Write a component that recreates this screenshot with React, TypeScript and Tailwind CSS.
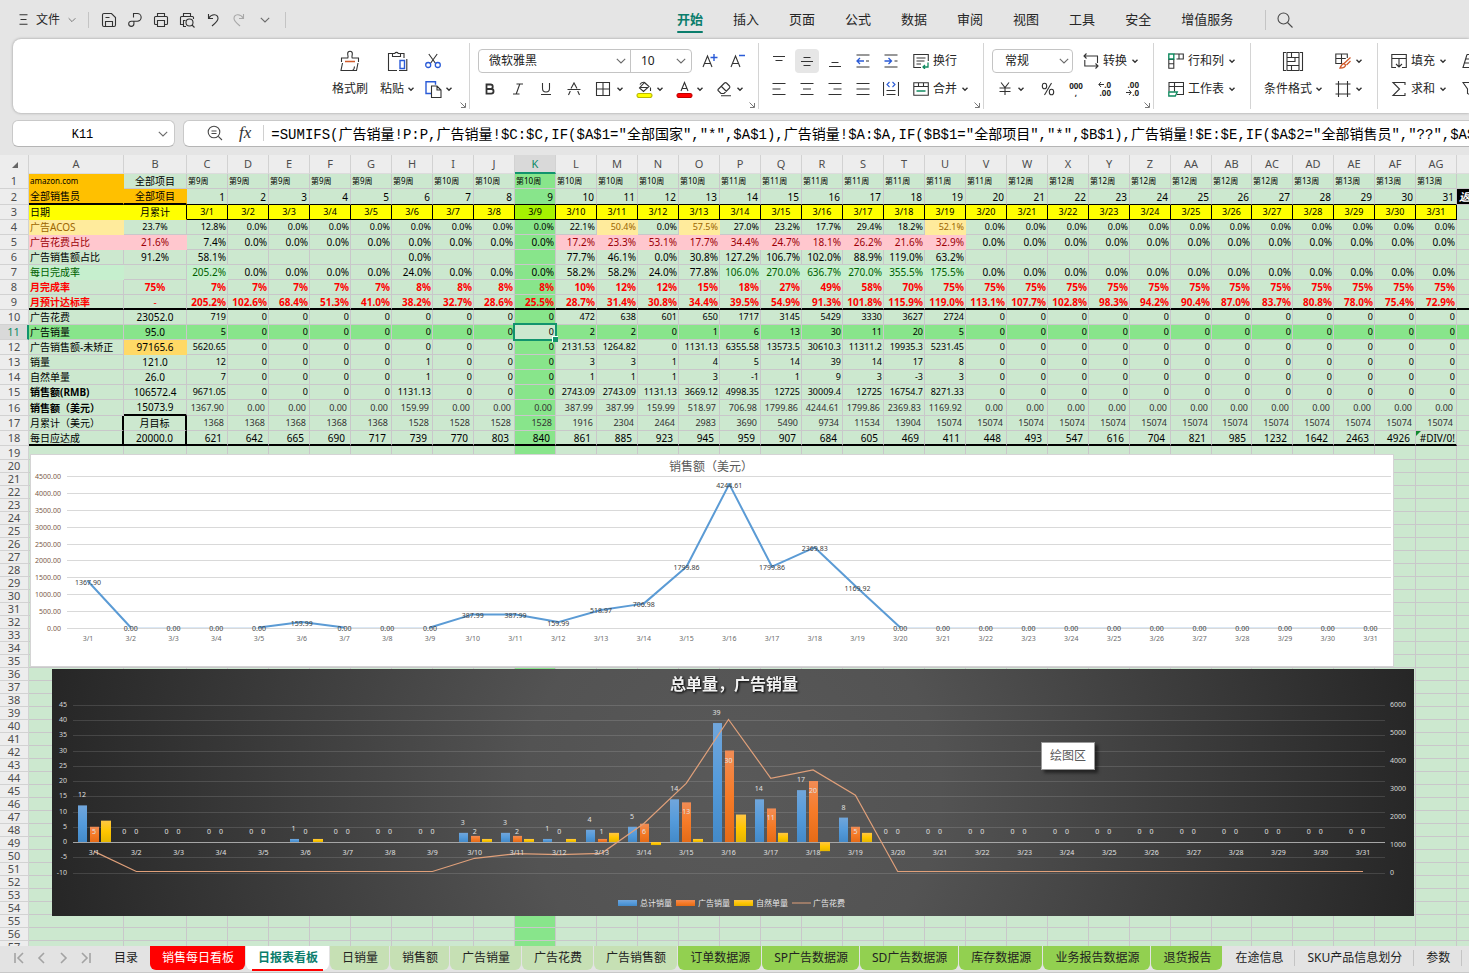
import type { ReactNode } from 'react';
import { clsx } from 'clsx';

// '0*3 5' -> ['0', '0', '0', '5'], '_' is a blank cell
const expand = (src: string): string[] =>
  src.split(' ').flatMap((part) => {
    const [value, count] = part.split('*');
    return Array(Number(count ?? 1)).fill(value === '_' ? '' : value);
  });

const COLUMNS = 'A B C D E F G H I J K L M N O P Q R S T U V W X Y Z AA AB AC AD AE AF AG AH'.split(' ');
const ACTIVE_COL = 'K';
const ACTIVE_ROW = 11;

const DATES = Array.from({ length: 31 }, (_, i) => `3/${i + 1}`);

interface SheetRow {
  label: string;
  total: string;
  values: string[];
  height?: string;
  labelClass?: string;
  totalClass?: string;
  valueClass?: string;
  cellClass?: (value: string, index: number) => string;
}

const GOOD = 'bg-[#c6efce] text-[#006100] border-[#c6efce]';
const BAD = 'bg-[#ffc7ce] text-[#9c0006] border-[#ffc7ce]';
const NEUTRAL = 'bg-[#ffeb9c] text-[#9c6500] border-[#ffeb9c]';

const ROWS: SheetRow[] = [
  {
    label: 'amazon.com',
    total: '全部项目',
    values: expand('第9周*6 第10周*7 第11周*7 第12周*7 第13周*4'),
    labelClass: 'bg-[#ffc000] border-[#ffc000] text-[8px]',
    valueClass: 'text-left text-[8px] pl-px',
  },
  {
    label: '全部销售员',
    total: '全部项目',
    values: DATES.map((_, i) => String(i + 1)),
    height: 'h-4',
    labelClass: 'bg-[#ffc000] border-r-[#ffc000] border-b-2 border-b-black',
    totalClass: 'bg-[#ffc000] border-r-[#ffc000] border-b-2 border-b-black',
    valueClass: 'text-right pr-0.5 border-b-black',
  },
  {
    label: '日期',
    total: '月累计',
    values: DATES,
    labelClass: 'bg-[#ffff00] border-[#ffff00]',
    totalClass: 'bg-[#ffff00] border-b-[#ffff00] border-r-black',
    valueClass: 'text-center text-[9px] border-black',
    cellClass: (_, i) => (i === 8 ? 'bg-[#a6f200]' : 'bg-[#ffff00]'),
  },
  {
    label: '广告ACOS',
    total: '23.7%',
    values: expand('12.8% 0.0%*8 22.1% 50.4% 0.0% 57.5% 27.0% 23.2% 17.7% 29.4% 18.2% 52.1% 0.0%*12'),
    labelClass: NEUTRAL,
    totalClass: 'text-[9px]',
    valueClass: 'text-right pr-px text-[9px]',
    cellClass: (value) => (parseFloat(value) > 50 ? NEUTRAL : ''),
  },
  {
    label: '广告花费占比',
    total: '21.6%',
    values: expand('7.4% 0.0%*8 17.2% 23.3% 53.1% 17.7% 34.4% 24.7% 18.1% 26.2% 21.6% 32.9% 0.0%*12'),
    labelClass: BAD,
    totalClass: BAD,
    valueClass: 'text-right pr-px',
    cellClass: (value) => (parseFloat(value) > 10 ? BAD : ''),
  },
  {
    label: '广告销售额占比',
    total: '91.2%',
    values: expand('58.1% _*4 0.0% _*3 77.7% 46.1% 0.0% 30.8% 127.2% 106.7% 102.0% 88.9% 119.0% 63.2% _*12'),
    valueClass: 'text-right pr-px',
  },
  {
    label: '每日完成率',
    total: '',
    values: expand('205.2% 0.0%*4 24.0% 0.0%*3 58.2%*2 24.0% 77.8% 106.0% 270.0% 636.7% 270.0% 355.5% 175.5% 0.0%*12'),
    labelClass: GOOD,
    valueClass: 'text-right pr-px',
    cellClass: (value) => (parseFloat(value) > 100 ? GOOD : ''),
  },
  {
    label: '月完成率',
    total: '75%',
    values: expand('7%*5 8%*4 10% 12%*2 15% 18% 27% 49% 58% 70% 75%*13'),
    labelClass: 'text-[#ff0000] font-bold',
    totalClass: 'text-[#ff0000] font-bold',
    valueClass: 'text-right pr-px text-[#ff0000] font-bold',
  },
  {
    label: '月预计达标率',
    total: '-',
    values: expand(
      '205.2% 102.6% 68.4% 51.3% 41.0% 38.2% 32.7% 28.6% 25.5% 28.7% 31.4% 30.8% 34.4% 39.5% 54.9% 91.3% 101.8% 115.9% 119.0% 113.1% 107.7% 102.8% 98.3% 94.2% 90.4% 87.0% 83.7% 80.8% 78.0% 75.4% 72.9%'
    ),
    labelClass: 'text-[#ff0000] font-bold border-b-2 border-b-black',
    totalClass: 'text-[#ff0000] border-b-2 border-b-black',
    valueClass: 'text-right pr-px text-[#ff0000] font-bold border-b-2 border-b-black',
  },
  {
    label: '广告花费',
    total: '23052.0',
    values: expand('719 0*8 472 638 601 650 1717 3145 5429 3330 3627 2724 0*12'),
    valueClass: 'text-right pr-px text-[9px]',
  },
  {
    label: '广告销量',
    total: '95.0',
    values: expand('5 0*8 2 2 0 1 6 13 30 11 20 5 0*12'),
    valueClass: 'text-right pr-px text-[9px]',
  },
  {
    label: '广告销售额-未矫正',
    total: '97165.6',
    values: expand('5620.65 0*8 2131.53 1264.82 0 1131.13 6355.58 13573.5 30610.3 11311.2 19935.3 5231.45 0*12'),
    totalClass: 'bg-[#ffd966] border-[#ffd966]',
    valueClass: 'text-right pr-px text-[9px]',
  },
  {
    label: '销量',
    total: '121.0',
    values: expand('12 0*4 1 0*3 3 3 1 4 5 14 39 14 17 8 0*12'),
    valueClass: 'text-right pr-px text-[9px]',
  },
  {
    label: '自然单量',
    total: '26.0',
    values: expand('7 0*4 1 0*3 1 1 1 3 -1 1 9 3 -3 3 0*12'),
    valueClass: 'text-right pr-px text-[9px]',
  },
  {
    label: '销售额(RMB)',
    total: '106572.4',
    values: expand('9671.05 0*4 1131.13 0*3 2743.09*2 1131.13 3669.12 4998.35 12725 30009.4 12725 16754.7 8271.33 0*12'),
    labelClass: 'font-bold',
    valueClass: 'text-right pr-px text-[9px]',
  },
  {
    label: '销售额（美元）',
    total: '15073.9',
    values: expand('1367.90 0.00*4 159.99 0.00*3 387.99*2 159.99 518.97 706.98 1799.86 4244.61 1799.86 2369.83 1169.92 0.00*12'),
    height: 'h-4',
    labelClass: 'font-bold',
    totalClass: 'border-b-2 border-b-black',
    valueClass: 'text-right pr-[3px] text-[9px] text-[#333333]',
  },
  {
    label: '月累计（美元）',
    total: '月目标',
    values: expand('1368*5 1528*4 1916 2304 2464 2983 3690 5490 9734 11534 13904 15074*13'),
    labelClass: 'border-r-2 border-r-black',
    totalClass: 'border-r-2 border-r-black',
    valueClass: 'text-right pr-[3px] text-[9px] text-[#333333]',
  },
  {
    label: '每日应达成',
    total: '20000.0',
    values: expand(
      '621 642 665 690 717 739 770 803 840 861 885 923 945 959 907 684 605 469 411 448 493 547 616 704 821 985 1232 1642 2463 4926 #DIV/0!'
    ),
    labelClass: 'border-r-2 border-r-black border-b-2 border-b-black',
    totalClass: 'border-r-2 border-r-black border-b-2 border-b-black',
    valueClass: 'text-right border-b-2 border-b-black',
    cellClass: (value) => (value.startsWith('#') ? 'pr-px' : 'pr-[5px]'),
  },
];

const rowValues = (n: number) => ROWS[n - 1].values.map(Number);

/* ---------- icons ---------- */

interface IconProps {
  size?: number;
  color?: string;
  children: ReactNode;
}

function Icon({ size = 16, color = '#333333', children }: IconProps) {
  return (
    <svg
      width={size}
      height={size}
      viewBox={`0 0 ${size} ${size}`}
      fill="none"
      stroke={color}
      strokeWidth="1.1"
      className="shrink-0"
      aria-hidden="true"
    >
      {children}
    </svg>
  );
}

const Caret = () => (
  <svg width="6" height="6" viewBox="0 0 6 6" fill="none" stroke="#333333" strokeWidth="1.4" className="shrink-0" aria-hidden="true">
    <path d="M0.5 1.7 3 4.2 5.5 1.7" />
  </svg>
);

const Chevron = ({ className = '' }: { className?: string }) => (
  <svg width="10" height="6" viewBox="0 0 10 6" fill="none" stroke="#6b6b6b" strokeWidth="1.1" className={clsx('shrink-0', className)} aria-hidden="true">
    <path d="M0.8 0.8 5 5 9.2 0.8" />
  </svg>
);

const Corner = () => (
  <svg width="6" height="6" viewBox="0 0 6 6" fill="none" stroke="#777777" className="absolute bottom-[5px] right-1" aria-hidden="true">
    <path d="M0.5 0.5 5 5M5.5 1V5.5H1" />
  </svg>
);

const MenuLines = () => (
  <Icon size={11}>
    <path d="M1.500 .8h8M2.500 5.500h6M1.500 10.200h8" />
  </Icon>
);
const Save = () => (
  <Icon>
    <path d="M1.500 3A1.500 1.500 0 0 1 3 1.500h7.500l4 4V13a1.500 1.500 0 0 1-1.500 1.500H3A1.500 1.500 0 0 1 1.500 13zM4.500 14.500V9.500h7v5M4.500 5.500h4" />
  </Icon>
);
const Export = () => (
  <Icon>
    <path d="M6.500 5.500v-4h3.800a3.800 3.800 0 0 1 0 7.700H4.300a2.600 2.600 0 1 0 2.600 2.600V9.200" />
  </Icon>
);
const Print = () => (
  <Icon>
    <path d="M4.500 4.500v-3h7v3M4 12.500H2.500a1 1 0 0 1-1-1v-6a1 1 0 0 1 1-1h11a1 1 0 0 1 1 1v6a1 1 0 0 1-1 1H12M4.500 8.500h7v6h-7z" />
  </Icon>
);
const Preview = () => (
  <Icon>
    <path d="M4.500 4.500v-3h7v3M4 12.500H1.500v-7a1 1 0 0 1 1-1h11a1 1 0 0 1 1 1V7M6.500 8.500h-2v6H7" />
    <circle cx="10.500" cy="10.500" r="3.500" />
    <path d="m13 13 2.500 2.500" />
  </Icon>
);
const Undo = () => (
  <Icon>
    <path d="M3.500 2v4.500H8M3.700 6.200C7 1 13 2 13 6.500c0 2.500-2.500 4.500-6 7.500" />
  </Icon>
);
const Redo = () => (
  <Icon color="#a8a8a8">
    <path d="M12.500 2v4.500H8M12.300 6.200C9 1 3 2 3 6.500c0 2.500 2.500 4.500 6 7.500" />
  </Icon>
);
const Search = () => (
  <Icon size={18} color="#4a4a4a">
    <circle cx="7.500" cy="7.500" r="5.500" />
    <path d="m11.500 11.500 5 5" />
  </Icon>
);
const FormatPainter = () => (
  <Icon size={22}>
    <path d="M2.500 12V8h6.300c.8-1.500-.3-3-.1-4.500a2.300 2.300 0 0 1 4.600 0c.2 1.500-.9 3-.1 4.500h6.300v4M3.500 13l-1.500 7.500h15.500L19 13M13.500 20.500c1.500-1 2-2.500 2-4" />
    <path d="M6 11.500h10" stroke="#d05a2a" strokeWidth="1.400" />
  </Icon>
);
const Paste = () => (
  <Icon size={22}>
    <path d="M6 3.500H2.500v17H11M15 3.500h3V8M6.500 3.500h2.200a2 2 0 0 1 3.600 0h2.200v3h-8zM20.800 9v11.500H13" />
    <path d="M14 10.500h4.500v8H14z" stroke="#2a5bd7" strokeWidth="1.400" />
  </Icon>
);
const Cut = () => (
  <Icon>
    <path d="m3.800 1 6.800 9.500M12.200 1 5.400 10.500" />
    <g stroke="#2a5bd7" strokeWidth="1.300">
      <circle cx="3.200" cy="12" r="2.500" />
      <circle cx="12.800" cy="12" r="2.500" />
    </g>
  </Icon>
);
const Copy = () => (
  <Icon size={17}>
    <path d="M6 12.500H1V.8h9.500v3" stroke="#2a5bd7" strokeWidth="1.400" />
    <path d="M6.500 5h5.500l4 4v7.500H6.500zM12 5v4h4" />
  </Icon>
);
const GrowFont = () => (
  <Icon>
    <path d="M1 14 5.500 3 10 14M2.600 10.500h5.800" />
    <path d="M12 1v7M8.500 4.500h7" stroke="#2a5bd7" strokeWidth="1.400" />
  </Icon>
);
const ShrinkFont = () => (
  <Icon>
    <path d="M1 14 5.500 3 10 14M2.600 10.500h5.800" />
    <path d="M9 2.500h6" stroke="#2a5bd7" strokeWidth="1.400" />
  </Icon>
);
const Bold = () => (
  <Icon>
    <path d="M4.500 3.500h4a2.200 2.200 0 0 1 0 4.500h-4zM4.500 8h4.700a2.300 2.300 0 0 1 0 4.700H4.500z" strokeWidth="1.800" />
  </Icon>
);
const Italic = () => (
  <Icon>
    <path d="M6.500 3h6.500M3 13h6.500M9.800 3 6.200 13" />
  </Icon>
);
const Underline = () => (
  <Icon>
    <path d="M4.500 2v5.500a3.500 3.500 0 0 0 7 0V2M3 13.500h10" />
  </Icon>
);
const Strike = () => (
  <Icon>
    <path d="M5 7.500 8 2l3 5.500M1.500 8.500h13M4.300 10l-1.800 4M11.700 10l1.800 4" />
  </Icon>
);
const Borders = () => (
  <Icon>
    <path d="M1.500 1.500h13v13h-13zM8 1.500v13M1.500 8h13" />
  </Icon>
);
const FillColor = () => (
  <Icon size={17}>
    <path d="M4 3.500c1.500-3 5.500-3 6 0M8.500 1.500l4.500 4-5.500 5L3.500 7zM4.500 6.500h7M14.500 6.500v3.500" />
    <rect x="1" y="12.500" width="15" height="4" rx="2" fill="#ffff00" stroke="#b8b800" />
  </Icon>
);
const FontColor = () => (
  <Icon size={17}>
    <path d="M5 10 8.500 1.500 12 10M6.200 7.500h4.600" />
    <rect x="1" y="12.500" width="15" height="4" rx="2" fill="#ff0000" stroke="#c00000" />
  </Icon>
);
const Eraser = () => (
  <Icon>
    <path d="m2 8.500 6.500-6.500a1.500 1.500 0 0 1 2 0l3 3a1.500 1.500 0 0 1 0 2L8 12.500H5L2 9.500zM5.500 5.500l5 5M5 14.800h10" />
  </Icon>
);
const AlignTop = () => (
  <Icon>
    <path d="M2 3.500h12M4.500 7.500h7" />
  </Icon>
);
const AlignMiddle = () => (
  <Icon>
    <path d="M4.500 4.500h7M2 8.500h12M4.500 12.500h7" />
  </Icon>
);
const AlignBottom = () => (
  <Icon>
    <path d="M4.500 9.500h7M2 13.500h12" />
  </Icon>
);
const Outdent = () => (
  <Icon>
    <path d="M1.500 2h13M1.500 14h13M11 8h3" />
    <path d="M9 8H2M5 5 2 8l3 3" stroke="#2a5bd7" strokeWidth="1.300" />
  </Icon>
);
const Indent = () => (
  <Icon>
    <path d="M1.500 2h13M1.500 14h13M11.500 8h3" />
    <path d="M1.500 8h7M5.500 5l3 3-3 3" stroke="#2a5bd7" strokeWidth="1.300" />
  </Icon>
);
const AlignLeft = () => (
  <Icon>
    <path d="M1.500 2.500h13M1.500 8h8M1.500 13.500h13" />
  </Icon>
);
const AlignCenter = () => (
  <Icon>
    <path d="M1.500 2.500h13M4 8h8M1.500 13.500h13" />
  </Icon>
);
const AlignRight = () => (
  <Icon>
    <path d="M1.500 2.500h13M6.500 8h8M1.500 13.500h13" />
  </Icon>
);
const Justify = () => (
  <Icon>
    <path d="M1.500 2.500h13M1.500 8h13M1.500 13.500h13" />
  </Icon>
);
const Distribute = () => (
  <Icon>
    <path d="M.500 1v14M15.500 1v14M3.500 9.500h9M3.500 13.500h9" />
    <path d="M6.500 1 4 3.500 6.500 6M9.500 1 12 3.500 9.500 6" stroke="#2a5bd7" />
  </Icon>
);
const Wrap = () => (
  <Icon>
    <path d="M8 14.500H.800v-13h14.500V8M3.500 5h9M3.500 8h8M3.500 11H8" />
    <path d="M15 9.500v4.500h-5M12 12l-2 2 2 2" stroke="#0f8a5f" strokeWidth="1.300" />
  </Icon>
);
const Merge = () => (
  <Icon>
    <path d="M.800 1.800h14.500v12.500H.800zM.800 5.500h14.500M5.500 1.800v3.700M10.500 1.800v3.700" />
    <path d="M3.500 10h9" stroke="#0f8a5f" strokeWidth="1.400" />
  </Icon>
);
const Convert = () => (
  <Icon>
    <path d="M3.500.500 1 3l2.500 2.500M1 3h13.500v7M12.500 15.500 15 13l-2.500-2.500M15 13H1.800V7" />
  </Icon>
);
const Yen = () => (
  <Icon>
    <path d="M4 1.500 8 6.500l4-5M8 6.500V14M2.500 7h11M2.500 10.500h11" />
  </Icon>
);
const Percent = () => (
  <Icon>
    <path d="M11.500 2 4.500 14" />
    <ellipse cx="4.500" cy="5" rx="2.200" ry="2.800" />
    <ellipse cx="11.500" cy="11" rx="2.200" ry="2.800" />
  </Icon>
);
const RowsCols = () => (
  <Icon>
    <path d="M.800 6.500h5v8.700h-5zM.800 10.800h5M6 1h9.300v5H8.500M11 1v5" />
    <path d="M.800 1h5v5h-5z" stroke="#0f8a5f" strokeWidth="1.400" />
  </Icon>
);
const Worksheet = () => (
  <Icon>
    <path d="M1 10.500v-9h14.500v12H9M1 5.500h14.500M6.500 1.500v9" />
    <path d="M.800 11h8.500l-2 4H.800z" stroke="#0f8a5f" strokeWidth="1.300" />
  </Icon>
);
const CondFormat = () => (
  <Icon size={22}>
    <path d="M4 2.500H1.500v18H4M18 2.500h2.500v18H18M5 2.500h12v18H5zM5 7.500h12M5 15.500h12M9.500 2.500v5M9.500 15.500v5M5 11.500h8v-4" />
  </Icon>
);
const TableStyle = () => (
  <Icon>
    <path d="M7 10.500H.800v-9.500h11.500v4M.800 5.500h10M6.500 1v9" />
    <path d="m15.500 4.500-6.500 6M9 10.500c-2 0-2.500 1.500-4 4.500 3 0 5.500-.5 5.500-3zM11.500 12l4-4" stroke="#d05a2a" strokeWidth="1.300" />
  </Icon>
);
const Frame = () => (
  <Icon>
    <path d="M3.500 0v16M12.500 0v16M.500 3h15M.500 13h15" />
  </Icon>
);
const Fill = () => (
  <Icon>
    <path d="M5 14.500H.800V1.500h14.500v13H11M.800 5.500h14.500M8 5.500v8.500M5 11l3 3 3-3" />
  </Icon>
);
const Sum = () => (
  <Icon>
    <path d="M14 4V1.500H2L8.500 8 2 14.500h12V12" />
  </Icon>
);
const Triangle = () => (
  <Icon>
    <path d="M5 1.500h10M5 1.500 1 14.500h14M4 6h11M2.500 10h12" />
  </Icon>
);
const Filter = () => (
  <Icon>
    <path d="M1 1.500h14L9.500 8v6.500l-4-2V8z" />
  </Icon>
);
const SmallArrow = ({ d }: { d: string }) => (
  <svg width="6" height="7" viewBox="0 0 6 7" fill="none" stroke="#333333" className="shrink-0" aria-hidden="true">
    <path d={d} />
  </svg>
);

/* ---------- ribbon ---------- */

interface ToolProps {
  label: string;
  className?: string;
  children: ReactNode;
}

function Tool({ label, className, children }: ToolProps) {
  return (
    <button type="button" aria-label={label} title={label} className={clsx('flex h-6 shrink-0 items-center', className)}>
      {children}
    </button>
  );
}

interface GroupProps {
  className: string;
  corner?: boolean;
  children: ReactNode;
}

function Group({ className, corner, children }: GroupProps) {
  return (
    <div className={clsx('relative flex shrink-0 py-2', className)}>
      {children}
      {corner && <Corner />}
      <span className="absolute bottom-1 right-0 top-1 w-px bg-[#d4d4d4]" />
    </div>
  );
}

const Line = ({ children }: { children: ReactNode }) => <div className="flex h-7 items-center">{children}</div>;

const SELECT = 'h-[22px] w-full appearance-none bg-transparent text-[12px] text-[#222222] outline-none';

const MENUS = ['插入', '页面', '公式', '数据', '审阅', '视图', '工具', '安全', '增值服务'];

function MenuBar() {
  return (
    <header className="flex h-[39px] shrink-0 items-center text-[#262626]">
      <div className="flex w-[677px] shrink-0 items-center">
        <button type="button" className="ml-[18px] flex items-center text-[12px]">
          <MenuLines />
          <span className="ml-[7px] mr-2">文件</span>
          <Chevron className="w-2" />
        </button>
        <span className="ml-3 h-4 w-px bg-[#c4c4c4]" />
        <div className="ml-3 flex items-center gap-2.5">
          <Tool label="保存"><Save /></Tool>
          <Tool label="输出"><Export /></Tool>
          <Tool label="打印"><Print /></Tool>
          <Tool label="打印预览"><Preview /></Tool>
          <Tool label="撤销"><Undo /></Tool>
          <Tool label="恢复"><Redo /></Tool>
          <Tool label="更多" className="ml-[3px]"><Chevron /></Tool>
        </div>
        <span className="ml-[15px] h-4 w-px bg-[#c4c4c4]" />
      </div>
      <nav className="flex shrink-0 items-center gap-[30px] text-[13px]">
        <a href="#home" className="relative font-bold text-[#0a7d6c]">
          开始
          <span className="absolute -bottom-1 left-0 h-0.5 w-full rounded bg-[#0a7d6c]" />
        </a>
        {MENUS.map((menu) => (
          <a key={menu} href={`#${menu}`}>{menu}</a>
        ))}
      </nav>
      <span className="ml-8 h-5 w-px shrink-0 bg-[#c4c4c4]" />
      <Tool label="搜索" className="ml-2.5"><Search /></Tool>
    </header>
  );
}

function Ribbon() {
  return (
    <div className="ml-[13px] flex h-[74px] shrink-0 overflow-hidden rounded-l-lg bg-white text-[12px] text-[#262626] shadow-[0_0_3px_rgba(0,0,0,0.35)]">
      <Group className="w-[457px] justify-end pr-[15px]" corner>
        <button type="button" className="flex w-12 flex-col items-center">
          <Line><FormatPainter /></Line>
          <Line>格式刷</Line>
        </button>
        <button type="button" className="flex w-[46px] flex-col items-center">
          <Line><Paste /></Line>
          <Line><span className="mr-1">粘贴</span><Caret /></Line>
        </button>
        <div className="ml-px w-[34px]">
          <Line><Tool label="剪切" className="ml-1"><Cut /></Tool></Line>
          <Line><Tool label="复制" className="ml-1 gap-1"><Copy /><Caret /></Tool></Line>
        </div>
      </Group>

      <Group className="w-[289px] flex-col pl-2" corner>
        <Line>
          <div className="flex rounded border border-[#c4c4c4]">
            <div className="relative w-[152px] border-r border-[#c4c4c4]">
              <select aria-label="字体" className={clsx(SELECT, 'pl-2.5')}>
                <option>微软雅黑</option>
              </select>
              <Chevron className="pointer-events-none absolute right-1 top-2" />
            </div>
            <div className="relative w-[60px]">
              <select aria-label="字号" className={clsx(SELECT, 'pl-2.5')}>
                <option>10</option>
              </select>
              <Chevron className="pointer-events-none absolute right-[5px] top-2" />
            </div>
          </div>
          <Tool label="增大字号" className="ml-1 w-7 justify-center"><GrowFont /></Tool>
          <Tool label="减小字号" className="w-7 justify-center"><ShrinkFont /></Tool>
        </Line>
        <Line>
          <Tool label="加粗" className="w-6 justify-center"><Bold /></Tool>
          <Tool label="倾斜" className="ml-1 w-6 justify-center"><Italic /></Tool>
          <Tool label="下划线" className="ml-1 w-6 justify-center"><Underline /></Tool>
          <Tool label="删除线" className="ml-1 w-6 justify-center"><Strike /></Tool>
          <Tool label="边框" className="ml-[9px] w-[41px] gap-1.5"><Borders /><Caret /></Tool>
          <Tool label="填充颜色" className="w-10 gap-1"><FillColor /><Caret /></Tool>
          <Tool label="字体颜色" className="w-10 gap-1"><FontColor /><Caret /></Tool>
          <Tool label="清除" className="gap-[5px]"><Eraser /><Caret /></Tool>
        </Line>
      </Group>

      <Group className="w-[225px] flex-col pl-2" corner>
        <Line>
          <Tool label="顶端对齐" className="w-6 justify-center"><AlignTop /></Tool>
          <Tool label="垂直居中" className="ml-1 w-6 justify-center rounded bg-[#e6e6e6]"><AlignMiddle /></Tool>
          <Tool label="底端对齐" className="ml-1 w-6 justify-center"><AlignBottom /></Tool>
          <Tool label="减少缩进" className="ml-1 w-6 justify-center"><Outdent /></Tool>
          <Tool label="增加缩进" className="ml-1 w-6 justify-center"><Indent /></Tool>
          <Tool label="自动换行" className="ml-2.5 gap-1"><Wrap />换行</Tool>
        </Line>
        <Line>
          <Tool label="左对齐" className="w-6 justify-center"><AlignLeft /></Tool>
          <Tool label="水平居中" className="ml-1 w-6 justify-center"><AlignCenter /></Tool>
          <Tool label="右对齐" className="ml-1 w-6 justify-center"><AlignRight /></Tool>
          <Tool label="两端对齐" className="ml-1 w-6 justify-center"><Justify /></Tool>
          <Tool label="分散对齐" className="ml-1 w-6 justify-center"><Distribute /></Tool>
          <Tool label="合并居中" className="ml-2.5 gap-1"><Merge />合并<span className="ml-px"><Caret /></span></Tool>
        </Line>
      </Group>

      <Group className="w-[170px] flex-col pl-2" corner>
        <Line>
          <div className="relative w-[81px] rounded border border-[#c4c4c4]">
            <select aria-label="数字格式" className={clsx(SELECT, 'pl-3')}>
              <option>常规</option>
            </select>
            <Chevron className="pointer-events-none absolute right-[3px] top-2" />
          </div>
          <Tool label="转换" className="ml-2.5 gap-1"><Convert />转换<span className="ml-px"><Caret /></span></Tool>
        </Line>
        <Line>
          <Tool label="货币" className="ml-[5px] gap-[5px]"><Yen /><Caret /></Tool>
          <Tool label="百分比" className="ml-[10px] w-7 justify-center"><Percent /></Tool>
          <Tool label="千位分隔" className="w-7 flex-col justify-center text-[8px] font-bold leading-[7px]">
            <span>000</span>
            <span>,</span>
          </Tool>
          <Tool label="增加小数位" className="w-7 flex-col items-end justify-center pr-[7px] text-[8px] font-bold leading-[8px]">
            <span className="flex"><SmallArrow d="M6 3.500H1M3 1 .8 3.500 3 6" />.0</span>
            <span>.00</span>
          </Tool>
          <Tool label="减少小数位" className="w-7 flex-col items-end justify-center pr-[7px] text-[8px] font-bold leading-[8px]">
            <span>.00</span>
            <span className="flex"><SmallArrow d="M0 3.500h5M3 1l2.200 2.500L3 6" />.0</span>
          </Tool>
        </Line>
      </Group>

      <Group className="w-[97px] flex-col pl-[14px]">
        <Line><Tool label="行和列" className="gap-1"><RowsCols />行和列<span className="ml-px"><Caret /></span></Tool></Line>
        <Line><Tool label="工作表" className="gap-1"><Worksheet />工作表<span className="ml-px"><Caret /></span></Tool></Line>
      </Group>

      <Group className="w-[127px] pl-3">
        <button type="button" className="flex w-[60px] flex-col items-center">
          <Line><CondFormat /></Line>
          <Line><span className="mr-1">条件格式</span><Caret /></Line>
        </button>
        <div className="ml-3">
          <Line><Tool label="表格样式" className="gap-[5px]"><TableStyle /><Caret /></Tool></Line>
          <Line><Tool label="单元格样式" className="gap-[5px]"><Frame /><Caret /></Tool></Line>
        </div>
      </Group>

      <div className="flex shrink-0 py-2 pl-[13px]">
        <div className="w-[71px]">
          <Line><Tool label="填充" className="gap-1"><Fill />填充<span className="ml-px"><Caret /></span></Tool></Line>
          <Line><Tool label="求和" className="gap-1"><Sum />求和<span className="ml-px"><Caret /></span></Tool></Line>
        </div>
        <div>
          <Line><Tool label="排序"><Triangle /></Tool></Line>
          <Line><Tool label="筛选"><Filter /></Tool></Line>
        </div>
      </div>
    </div>
  );
}

const FORMULA =
  '=SUMIFS(广告销量!P:P,广告销量!$C:$C,IF($A$1="全部国家","*",$A$1),广告销量!$A:$A,IF($B$1="全部项目","*",$B$1),广告销量!$E:$E,IF($A$2="全部销售员","??",$A$2))';

function FormulaBar() {
  return (
    <div className="flex h-[42px] shrink-0 items-center pb-0.5 pl-3">
      <div className="relative w-[163px] shrink-0 rounded-md border border-[#c9c9c9] border-b-[#b5b5b5] bg-white">
        <input
          aria-label="名称框"
          defaultValue="K11"
          className="block h-[25px] w-full rounded-md bg-transparent pr-[22px] pt-[3px] text-center font-['Liberation_Mono','Noto_Sans_CJK_SC',monospace] text-[12px] outline-none"
        />
        <Chevron className="absolute right-1.5 top-2.5" />
      </div>
      <div className="ml-2 flex h-[27px] min-w-0 flex-1 items-center rounded-l-md border border-r-0 border-[#c9c9c9] border-b-[#b5b5b5] bg-white pl-[23px]">
        <Tool label="缩小">
          <Icon color="#4a4a4a">
            <circle cx="7" cy="7" r="5.8" />
            <path d="m11.300 11.300 3.700 3.700M4.500 6h5M4.500 8.500h5" />
          </Icon>
        </Tool>
        <Tool label="插入函数" className="ml-4 font-['Liberation_Serif',serif] text-[17px] italic text-[#333333]">fx</Tool>
        <span className="ml-3 h-4 w-px shrink-0 bg-[#d0d0d0]" />
        <input
          aria-label="编辑栏"
          defaultValue={FORMULA}
          className="ml-[7px] h-[25px] min-w-0 flex-1 bg-transparent font-['Liberation_Mono','Noto_Sans_CJK_SC',monospace] text-[14px] text-black outline-none"
        />
      </div>
    </div>
  );
}

/* ---------- sheet ---------- */

const colWidth = (col: string) => {
  if (col === 'A') return 'w-[95px]';
  if (col === 'B') return 'w-[63px]';
  return col === 'AB' ? 'w-10' : 'w-[41px]';
};

const cellBg = (col: string, row: number) => {
  if (col === ACTIVE_COL && row === ACTIVE_ROW) return 'bg-[#cce8cf]';
  return col === ACTIVE_COL || row === ACTIVE_ROW ? 'bg-[#88e58b]' : 'bg-[#cce8cf]';
};

function RowHeader({ row }: { row: number }) {
  const active = row === ACTIVE_ROW;
  return (
    <th
      scope="row"
      className={clsx(
        'border-b border-b-[#d2d2d2] p-0 text-center text-[11px] font-normal leading-[12px]',
        active
          ? 'border-r-2 border-r-[#12946d] bg-[#d9d9d9] text-[#0b8a67]'
          : 'border-r border-r-[#d2d2d2] bg-[#ededed] text-[#4d4d4d]'
      )}
    >
      {row}
    </th>
  );
}

function Sheet() {
  return (
    <table className="w-[1498px] table-fixed border-separate border-spacing-0 whitespace-nowrap text-[10px] leading-[12px] text-black">
      <colgroup>
        <col className="w-[29px]" />
        {COLUMNS.map((col) => (
          <col key={col} className={colWidth(col)} />
        ))}
      </colgroup>
      <thead>
        <tr className="h-[19px] text-[11px]">
          <th className="border-r border-[#d2d2d2] bg-[#ededed] p-0">
            <svg width="6" height="6" viewBox="0 0 6 6" className="ml-3" aria-hidden="true">
              <path d="M6 0v6H0z" fill="#666666" />
            </svg>
          </th>
          {COLUMNS.map((col) => (
            <th
              key={col}
              scope="col"
              className={clsx(
                'border-r border-r-[#d2d2d2] p-0 font-normal',
                col === ACTIVE_COL
                  ? 'border-b-2 border-b-[#12946d] bg-[#d9d9d9] text-[#0b8a67]'
                  : 'border-b border-b-[#dcdcdc] bg-[#ededed] pb-px text-[#4d4d4d]'
              )}
            >
              {col}
            </th>
          ))}
        </tr>
      </thead>
      <tbody>
        {ROWS.map((data, r) => {
          const row = r + 1;
          return (
            <tr key={row} className={data.height ?? 'h-[15px]'}>
              <RowHeader row={row} />
              <td className={cell(cellBg('A', row), 'pl-px', data.labelClass)}>{data.label}</td>
              <td className={cell(cellBg('B', row), 'text-center', data.totalClass)}>{data.total}</td>
              {data.values.map((value, i) => {
                const col = COLUMNS[i + 2];
                const selected = col === ACTIVE_COL && row === ACTIVE_ROW;
                return (
                  <td key={col} className={cell(cellBg(col, row), data.valueClass, data.cellClass?.(value, i), 'relative')}>
                    {value}
                    {selected && (
                      <span className="absolute -inset-x-0.5 -inset-y-0.5 z-10 border-2 border-[#12946d]">
                        <span className="absolute -bottom-[3px] -right-[3px] size-1.5 border-l border-t border-white bg-[#12946d]" />
                      </span>
                    )}
                    {value.startsWith('#') && (
                      <svg width="5" height="5" viewBox="0 0 5 5" className="absolute left-0 top-0" aria-hidden="true">
                        <path d="M0 0h5L0 5z" fill="#0f8a2f" />
                      </svg>
                    )}
                  </td>
                );
              })}
              <td
                className={cell(
                  cellBg('AH', row),
                  'overflow-hidden pl-0.5',
                  row === 2 && 'bg-black text-[11px] font-bold italic text-white',
                  row === 9 && 'border-b-2 border-b-black'
                )}
              >
                {row === 2 && '返回'}
              </td>
            </tr>
          );
        })}
        {Array.from({ length: 39 }, (_, i) => i + 19).map((row) => (
          <tr key={row} className={row === 19 ? 'h-[14px]' : 'h-[13px]'}>
            <RowHeader row={row} />
            {COLUMNS.map((col) => (
              <td key={col} className={cell(cellBg(col, row))} />
            ))}
          </tr>
        ))}
      </tbody>
    </table>
  );
}

// the default gridlines apply only on sides the extra classes leave alone
function cell(bg: string, ...rest: (string | false | undefined)[]) {
  const extra = clsx(rest);
  const has = (re: RegExp) => re.test(extra);
  return clsx(
    'p-0 leading-[12px]',
    !has(/(^| )bg-/) && bg,
    !has(/border-r-2/) && 'border-r',
    !has(/border-b-2/) && 'border-b',
    !has(/(^| )border-(\[|black)/) && [
      !has(/border-r-(\[|black)/) && 'border-r-[#c9c7ca]',
      !has(/border-b-(\[|black)/) && 'border-b-[#c9c7ca]',
    ],
    extra
  );
}

/* ---------- charts ---------- */

function SalesChart() {
  const sales = rowValues(16);
  const x = (i: number) => 58 + i * 42.75;
  const y = (v: number) => 174 - (v * 152) / 4500;
  const points = sales.map((v, i) => ({ x: x(i), y: y(v) }));

  return (
    <svg width="1364" height="213" viewBox="0 0 1364 213" className="absolute left-[30px] top-[299px]" role="img" aria-label="销售额（美元）">
      <rect x="0.5" y="0.5" width="1363" height="212" fill="#ffffff" stroke="#d4d4d4" />
      <text x="681" y="17" textAnchor="middle" fontSize="12" fill="#595959">销售额（美元）</text>
      {Array.from({ length: 10 }, (_, i) => i * 500).map((v) => (
        <g key={v}>
          <path d={`M37 ${Math.round(y(v)) + 0.5}H1361`} stroke="#d9d9d9" />
          <text x="31" y={y(v) + 3} textAnchor="end" fontSize="7" fill="#7a5a48">{v.toFixed(2)}</text>
        </g>
      ))}
      {points.slice(1).map((p, i) => {
        const flat = sales[i] === 0 && sales[i + 1] === 0;
        return (
          <path
            key={i}
            d={`M${points[i].x} ${points[i].y - 0.5}L${p.x} ${p.y - 0.5}`}
            stroke={flat ? '#dbe8f5' : '#5b9bd5'}
            strokeWidth={flat ? 1 : 2}
            strokeLinecap="round"
          />
        );
      })}
      {points.map((p, i) => (
        <g key={i} textAnchor="middle">
          <text x={p.x} y={p.y + 3} fontSize="7" fill="#404040">{sales[i].toFixed(2)}</text>
          <text x={p.x} y="187" fontSize="7" fill="#6b6b6b">{DATES[i]}</text>
        </g>
      ))}
    </svg>
  );
}

const LEGEND = [
  { x: 566, name: '总计销量', fill: 'url(#blue)' },
  { x: 624, name: '广告销量', fill: 'url(#orange)' },
  { x: 682, name: '自然单量', fill: 'url(#gold)' },
];

function OrdersChart() {
  const total = rowValues(13);
  const ads = rowValues(11);
  const natural = rowValues(14);
  const spend = rowValues(10);
  const x = (i: number) => 42 + i * 42.3;
  const y = (v: number) => 173 - v * 3.05;
  const bar = (left: number, width: number, v: number, fill: string) =>
    v !== 0 && <rect x={Math.round(left)} y={Math.min(y(v), 173)} width={width} height={Math.abs(v) * 3.05} fill={fill} />;

  return (
    <svg width="1362" height="247" viewBox="0 0 1362 247" className="absolute left-[52px] top-[514px]" role="img" aria-label="总单量，广告销量">
      <defs>
        <radialGradient id="panel" gradientUnits="userSpaceOnUse" cx="681" cy="123" r="692">
          <stop offset="0" stopColor="#595959" />
          <stop offset="0.3" stopColor="#535353" />
          <stop offset="1" stopColor="#262626" />
        </radialGradient>
        <linearGradient id="blue" x2="0" y2="1">
          <stop offset="0" stopColor="#71a6db" />
          <stop offset="0.5" stopColor="#559bdb" />
          <stop offset="1" stopColor="#438ac9" />
        </linearGradient>
        <linearGradient id="orange" x2="0" y2="1">
          <stop offset="0" stopColor="#f18c55" />
          <stop offset="0.5" stopColor="#f67b28" />
          <stop offset="1" stopColor="#e56b17" />
        </linearGradient>
        <linearGradient id="gold" x2="0" y2="1">
          <stop offset="0" stopColor="#ffc746" />
          <stop offset="0.5" stopColor="#ffc600" />
          <stop offset="1" stopColor="#e5b600" />
        </linearGradient>
      </defs>
      <rect width="1362" height="247" fill="url(#panel)" />
      <text x="682" y="21" textAnchor="middle" fontSize="16" fontWeight="700" fill="#f2f2f2" className="drop-shadow-[1px_1px_1px_#000000]">
        总单量，广告销量
      </text>
      {Array.from({ length: 12 }, (_, i) => i * 5 - 10).map((v) => (
        <g key={v}>
          <path d={`M21 ${Math.round(y(v)) + 0.5}H1333`} stroke={v === 0 ? '#a6a6a6' : '#ffffff'} strokeOpacity={v === 0 ? 1 : 0.13} />
          <text x="15" y={y(v) + 2} textAnchor="end" fontSize="7" fill="#d9d9d9">{v}</text>
        </g>
      ))}
      {Array.from({ length: 7 }, (_, i) => i * 1000).map((v) => (
        <text key={v} x="1338" y={206 - v * 0.028} fontSize="7" fill="#d9d9d9">{v}</text>
      ))}
      {total.map((_, i) => (
        <g key={i}>
          {bar(x(i) - 16, 9, total[i], 'url(#blue)')}
          {bar(x(i) - 4, 9, ads[i], 'url(#orange)')}
          {bar(x(i) + 7, 10, natural[i], 'url(#gold)')}
        </g>
      ))}
      <polyline
        points={spend.map((v, i) => `${x(i)},${202.5 - v * 0.028}`).join(' ')}
        fill="none"
        stroke="#e0a07a"
        strokeWidth="1.2"
      />
      {total.map((v, i) => (
        <g key={i} textAnchor="middle" fontSize="7" fill="#e0e0e0">
          <text x={x(i) - 12} y={y(v) - 8}>{v}</text>
          <text x={x(i)} y={Math.min(y(ads[i]) + 12, 165)}>{ads[i]}</text>
          <text x={x(i)} y="186">{DATES[i]}</text>
        </g>
      ))}
      {LEGEND.map((item) => (
        <g key={item.name}>
          <rect x={item.x} y="231" width="19" height="6" fill={item.fill} />
          <text x={item.x + 22} y="237" fontSize="8" fill="#e6e6e6">{item.name}</text>
        </g>
      ))}
      <path d="M740 234h19" stroke="#e0a07a" />
      <text x="761" y="237" fontSize="8" fill="#e6e6e6">广告花费</text>
    </svg>
  );
}

/* ---------- sheet tabs ---------- */

const LIGHT = 'bg-[#c6e0b4]';
const GREEN = 'bg-[#92d050]';

const TABS = [
  { name: '日销量', color: LIGHT },
  { name: '销售额', color: LIGHT },
  { name: '广告销量', color: LIGHT },
  { name: '广告花费', color: LIGHT },
  { name: '广告销售额', color: LIGHT },
  { name: '订单数据源', color: GREEN },
  { name: 'SP广告数据源', color: GREEN },
  { name: 'SD广告数据源', color: GREEN },
  { name: '库存数据源', color: GREEN },
  { name: '业务报告数据源', color: GREEN },
  { name: '退货报告', color: GREEN },
];

const NAV = [
  { label: '第一张', d: 'M1 1v10M9 1 4 6l5 5' },
  { label: '上一张', d: 'M8 1 3 6l5 5' },
  { label: '下一张', d: 'M3 1l5 5-5 5' },
  { label: '最后一张', d: 'M2 1l5 5-5 5M10 1v10' },
];

const TAB = 'mr-px h-6 shrink-0 rounded-b-md pl-3 pr-[11px]';

function SheetTabs() {
  return (
    <footer className="flex h-[27px] shrink-0 items-start overflow-hidden whitespace-nowrap border-b border-[#c8c8c8] bg-[#e3e3e3] text-[12px] leading-6 text-[#222222]">
      <div className="flex h-6 w-[102px] shrink-0 items-center gap-[11px] pl-3.5">
        {NAV.map((nav) => (
          <button key={nav.label} type="button" aria-label={nav.label}>
            <svg width="11" height="12" viewBox="0 0 11 12" fill="none" stroke="#a3a3a3" strokeWidth="1.600" aria-hidden="true">
              <path d={nav.d} />
            </svg>
          </button>
        ))}
      </div>
      <button type="button" className={TAB}>目录</button>
      <button type="button" className={clsx(TAB, 'bg-[#ff0000] text-white')}>销售每日看板</button>
      <button type="button" className={clsx(TAB, 'relative bg-white font-bold text-[#0a7d6c]')}>
        日报表看板
        <span className="absolute -bottom-px left-1.5 right-1.5 h-0.5 bg-[#ff0000]" />
      </button>
      {TABS.map((tab) => (
        <button key={tab.name} type="button" className={clsx(TAB, tab.color)}>
          {tab.name}
        </button>
      ))}
      {['在途信息', 'SKU产品信息划分', '参数'].map((name) => (
        <div key={name} className="flex h-6 shrink-0 items-center">
          <button type="button" className="pl-3 pr-[11px]">{name}</button>
          <span className="h-4 w-px bg-[#c4c4c4]" />
        </div>
      ))}
    </footer>
  );
}

export default function App() {
  return (
    <div className="flex h-screen flex-col overflow-hidden bg-[#e5e5e5] font-['Noto_Sans','Noto_Sans_CJK_SC',sans-serif]">
      <MenuBar />
      <Ribbon />
      <FormulaBar />
      <main className="relative min-h-0 flex-1 overflow-hidden bg-[#cce8cf]">
        <Sheet />
        <SalesChart />
        <OrdersChart />
        <div role="tooltip" className="absolute left-[1041px] top-[587px] border border-[#9a9a9a] bg-white px-2 py-1 text-[12px] leading-[18px] text-[#595959] shadow-[3px_3px_3px_rgba(0,0,0,0.5)]">
          绘图区
        </div>
      </main>
      <SheetTabs />
    </div>
  );
}
